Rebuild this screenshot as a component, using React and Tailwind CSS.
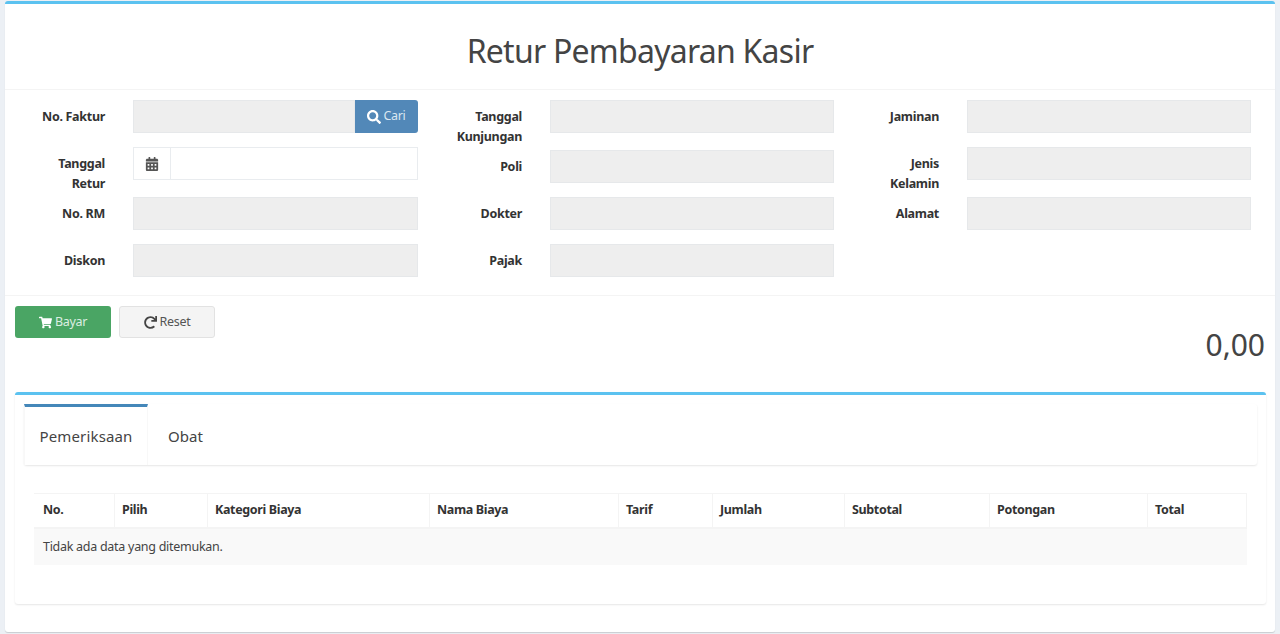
import { FaSearch, FaCalendarAlt, FaShoppingCart, FaRedo } from 'react-icons/fa';

const columns = [
  {
    width: 'w-[285px]',
    rows: [
      { label: ['No. Faktur'], type: 'search' },
      { label: ['Tanggal', 'Retur'], type: 'date' },
      { label: ['No. RM'] },
      { label: ['Diskon'] },
    ],
  },
  {
    width: 'w-[284px]',
    rows: [
      { label: ['Tanggal', 'Kunjungan'] },
      { label: ['Poli'] },
      { label: ['Dokter'] },
      { label: ['Pajak'] },
    ],
  },
  {
    width: 'w-[284px]',
    rows: [
      { label: ['Jaminan'] },
      { label: ['Jenis', 'Kelamin'] },
      { label: ['Alamat'] },
    ],
  },
];

const tableHeads = [
  ['No.', 'w-[81px] pl-[9px]'],
  ['Pilih', 'w-[93px] pl-[7px]'],
  ['Kategori Biaya', 'w-[222px] pl-[7px]'],
  ['Nama Biaya', 'w-[189px] pl-[7px]'],
  ['Tarif', 'w-[94px] pl-[7px]'],
  ['Jumlah', 'w-[132px] pl-[7px]'],
  ['Subtotal', 'w-[145px] pl-[7px]'],
  ['Potongan', 'w-[158px] pl-[7px]'],
  ['Total', 'w-[99px] pl-[7px]'],
];

const Field = ({ type }) => {
  if (type === 'search') {
    return (
      <div className="flex h-[33px]">
        <div className="flex-1 bg-[#eeeeee] border border-[#e6e8ea]" />
        <button className="w-[63px] flex items-center justify-center gap-[2px] bg-[#5288b8] text-[#dbe7f1] text-[12.5px] tracking-[-0.3px] rounded-r-[3px]">
          <FaSearch className="text-[14px] text-white" /> Cari
        </button>
      </div>
    );
  }
  if (type === 'date') {
    return (
      <div className="flex h-[33px] bg-white border border-[#e9ecef]">
        <div className="w-[37px] flex items-center justify-center border-r border-[#e9ecef] text-[#555555]">
          <FaCalendarAlt className="text-[14px]" />
        </div>
        <div className="flex-1" />
      </div>
    );
  }
  return <div className="h-[33px] bg-[#eeeeee] border border-[#e6e8ea]" />;
};

const FormRow = ({ label, type, width }) => (
  <div className="flex">
    <div className="w-[90px] shrink-0 pt-[7px] pb-[3px] text-right text-[12.5px] tracking-[-0.3px] font-bold leading-[20px] text-[#333333]">
      {label.map((line) => (
        <div key={line}>{line}</div>
      ))}
    </div>
    <div className={`${width} ml-[28px] mb-[14px]`}>
      <Field type={type} />
    </div>
  </div>
);

const App = () => {
  return (
    <div className="h-[634px] bg-[#ecf0f5] pl-[5px] pr-[5px] pt-px text-[#333333] font-['Noto_Sans','Open_Sans',sans-serif] overflow-hidden">
      <div className="h-[631px] bg-white border-t-[3px] border-[#5bc2f0] rounded-[3px] shadow-[0_1px_1px_rgba(0,0,0,0.15)]">
        <div className="h-[86px] flex items-center justify-center border-b border-[#f4f4f4]">
          <h1 className="text-[32px] tracking-[-0.75px] text-[#444444] font-normal mt-[9px]">Retur Pembayaran Kasir</h1>
        </div>

        <div className="flex h-[206px] pl-[10px] pt-[10px] border-b border-[#f4f4f4]">
          {columns.map((col, i) => (
            <div key={i} className="w-[417px] shrink-0">
              {col.rows.map((row) => (
                <FormRow key={row.label[0]} label={row.label} type={row.type} width={col.width} />
              ))}
            </div>
          ))}
        </div>

        <div className="px-[10px] pt-[10px]">
          <div className="flex justify-between h-[86px]">
            <div className="flex gap-2 h-[32px]">
              <button className="w-[96px] flex items-center justify-center gap-[3px] pt-px bg-[#4aa564] text-[#dceee2] text-[12.5px] tracking-[-0.3px] rounded-[3px]">
                <FaShoppingCart className="text-[13px] text-white" /> Bayar
              </button>
              <button className="w-[96px] flex items-center justify-center gap-[3px] pt-px bg-[#f4f4f4] border border-[#e2e2e2] text-[#555555] text-[12.5px] tracking-[-0.3px] rounded-[3px]">
                <FaRedo className="text-[13px] text-[#444444]" /> Reset
              </button>
            </div>
            <div className="mt-[17px] text-[30px] leading-[44px] text-[#444444]">0,00</div>
          </div>

          <div className="h-[212px] w-[1251px] bg-white border-t-[3px] border-[#5bc2f0] rounded-[3px] shadow-[0_1px_2px_rgba(0,0,0,0.1)] px-[9px] pt-[9px]">
            <div className="h-[61px] flex rounded-[3px] shadow-[0_1px_2px_rgba(0,0,0,0.1)]">
              <div className="w-[124px] h-[61px] flex items-center justify-center bg-white border-t-[3px] border-[#4487b9] border-x border-x-[#f8f8f8] text-[15px] tracking-[0.15px] text-[#444444]">
                Pemeriksaan
              </div>
              <div className="w-[75px] flex items-center justify-center border-t-[3px] border-transparent text-[15px] text-[#444444]">Obat</div>
            </div>

            <div className="mt-[28px] mx-[10px]">
              <div className="flex h-[36px] border-t border-b-2 border-[#f4f4f4] items-center text-[12.5px] tracking-[-0.35px]">
                {tableHeads.map(([name, width]) => (
                  <div key={name} className={`${width} h-full flex items-center font-bold text-[#333333] border-r border-[#f4f4f4] shrink-0`}>
                    {name}
                  </div>
                ))}
              </div>
              <div className="h-[36px] flex items-center pl-[9px] bg-[#f9f9f9] text-[12.5px] tracking-[-0.28px] text-[#444444]">Tidak ada data yang ditemukan.</div>
            </div>
          </div>
        </div>
      </div>
    </div>
  );
};

export default App;
